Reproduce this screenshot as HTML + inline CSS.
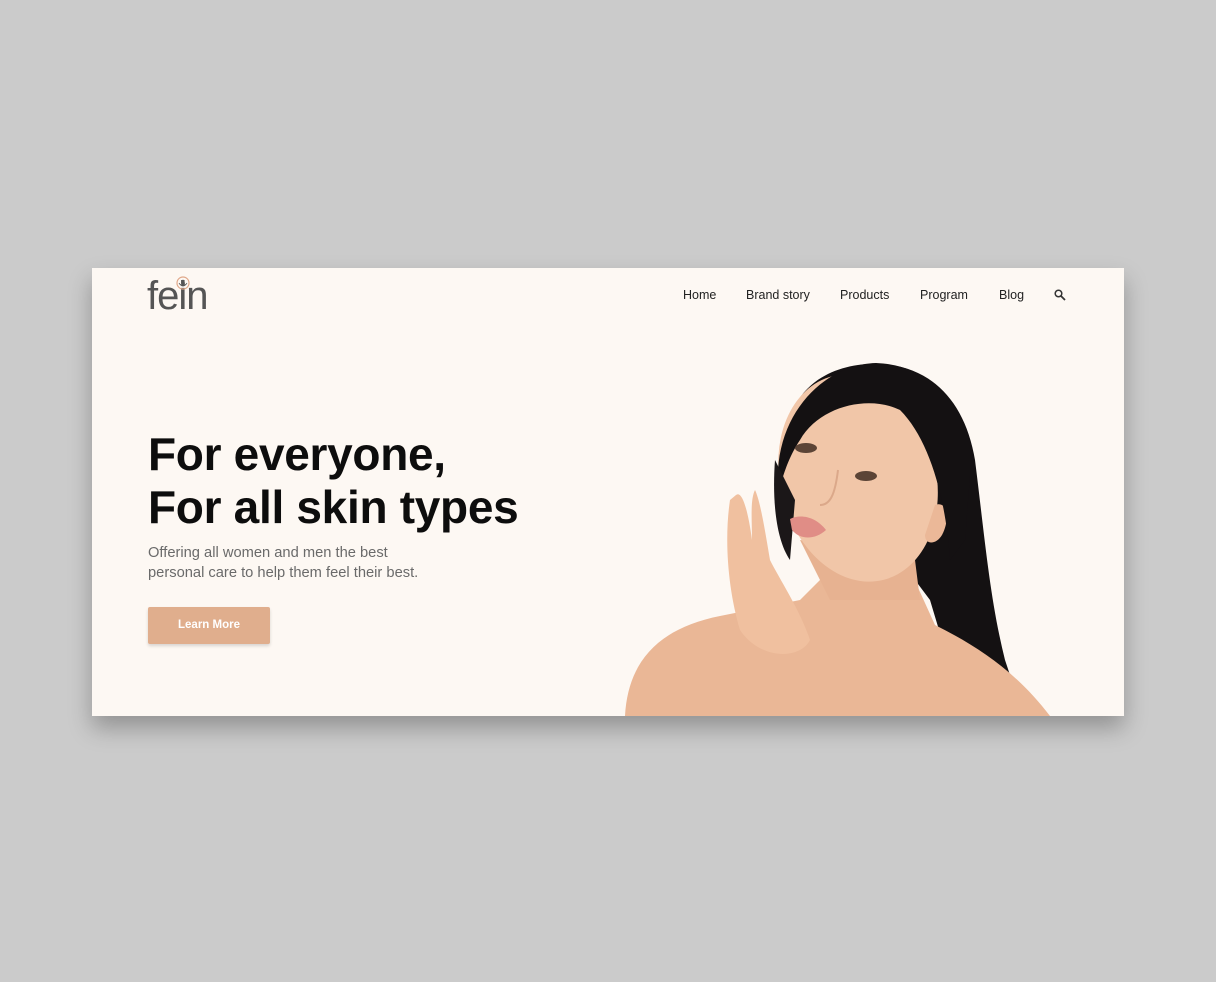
<!DOCTYPE html>
<html><head><meta charset="utf-8"><style>
*{margin:0;padding:0;box-sizing:border-box}
body{width:1216px;height:982px;background:#cbcbcb;position:relative;overflow:hidden;font-family:"Liberation Sans",sans-serif}
.card{position:absolute;left:92px;top:268px;width:1032px;height:448px;background:#fdf8f3;box-shadow:0 12px 22px rgba(0,0,0,0.28);overflow:hidden}
.logo{position:absolute;left:55px;top:3px;font-size:40px;color:#555;letter-spacing:-1px;font-weight:normal;line-height:50px}
.nav{position:absolute;top:20px;font-size:12.5px;color:#222}
h1{position:absolute;left:56px;top:160px;font-size:46px;line-height:53px;font-weight:bold;color:#0d0d0d;letter-spacing:-0.3px}
.sub{position:absolute;left:56px;top:275px;font-size:14.7px;line-height:20px;color:#6a6a6a}
.btn{position:absolute;left:56px;top:339px;width:122px;height:37px;background:#e0ae8d;color:#fff;font-size:11.5px;font-weight:bold;text-align:center;line-height:37px;border-radius:2px;box-shadow:0 2px 3px rgba(0,0,0,0.15)}
svg.p{position:absolute;left:0;top:0}
</style></head><body>
<div class="card">
<div class="logo">fein</div>
<svg style="position:absolute;left:83px;top:8px" width="16" height="14" viewBox="0 0 16 14"><circle cx="8" cy="7" r="6" fill="none" stroke="#e0a88a" stroke-width="1.2"/><path d="M8 4 C6 6 6 9 8 10 C10 9 10 6 8 4Z M4 7 C5 9 7 10 8 10 M12 7 C11 9 9 10 8 10" fill="#555" stroke="#555" stroke-width="0.8"/></svg>
<div class="nav" style="left:591px">Home</div>
<div class="nav" style="left:654px">Brand story</div>
<div class="nav" style="left:748px">Products</div>
<div class="nav" style="left:828px">Program</div>
<div class="nav" style="left:907px">Blog</div>
<svg style="position:absolute;left:962px;top:21px" width="12" height="12" viewBox="0 0 12 12"><circle cx="4.5" cy="4.5" r="3.3" fill="none" stroke="#333" stroke-width="1.5"/><path d="M7 7 L11 11" stroke="#333" stroke-width="1.8"/></svg>
<h1>For everyone,<br>For all skin types</h1>
<div class="sub">Offering all women and men the best<br>personal care to help them feel their best.</div>
<div class="btn">Learn More</div>
<svg class="p" width="1032" height="448" viewBox="92 268 1032 448">
<path d="M790,420 C800,380 840,362 880,364 C930,366 965,400 975,460 C985,540 990,600 1005,660 L1015,690 L960,700 L930,600 L900,560 Z" fill="#141112"/>
<path d="M625,716 C628,660 660,628 720,616 L800,600 L840,560 L910,570 L935,625 C975,645 1015,670 1050,716 Z" fill="#eab796"/>
<path d="M800,540 L830,600 L920,600 L915,560 Z" fill="#e7b291"/>
<ellipse cx="858" cy="478" rx="78" ry="105" transform="rotate(-14 858 478)" fill="#f1c6a8"/>
<path d="M935,505 C948,500 950,520 942,535 C936,545 925,545 925,535 Z" fill="#ebb898"/>
<path d="M778,470 C782,405 830,364 876,363 C928,365 962,400 972,450 L965,540 L950,560 C946,500 930,440 900,410 C870,395 820,405 800,440 C790,455 785,470 782,480 Z" fill="#141112"/>
<path d="M775,460 C772,500 776,540 790,560 L795,500 Z" fill="#1b1718"/>
<path d="M730,500 C724,540 728,590 740,630 C760,660 800,660 810,640 C800,610 780,580 770,560 C765,530 760,500 755,490 C750,500 752,520 752,540 C748,510 742,490 736,495 Z" fill="#f0c09f"/>
<ellipse cx="806" cy="448" rx="11" ry="5" fill="#5c4436"/>
<ellipse cx="866" cy="476" rx="11" ry="5" fill="#5c4436"/>
<path d="M790,519 C800,514 815,516 826,530 C815,540 800,540 792,530 Z" fill="#e08d86"/>
<path d="M838,470 C835,495 830,505 820,505" stroke="#dba88a" stroke-width="2" fill="none"/>
</svg>
</div>
</body></html>
